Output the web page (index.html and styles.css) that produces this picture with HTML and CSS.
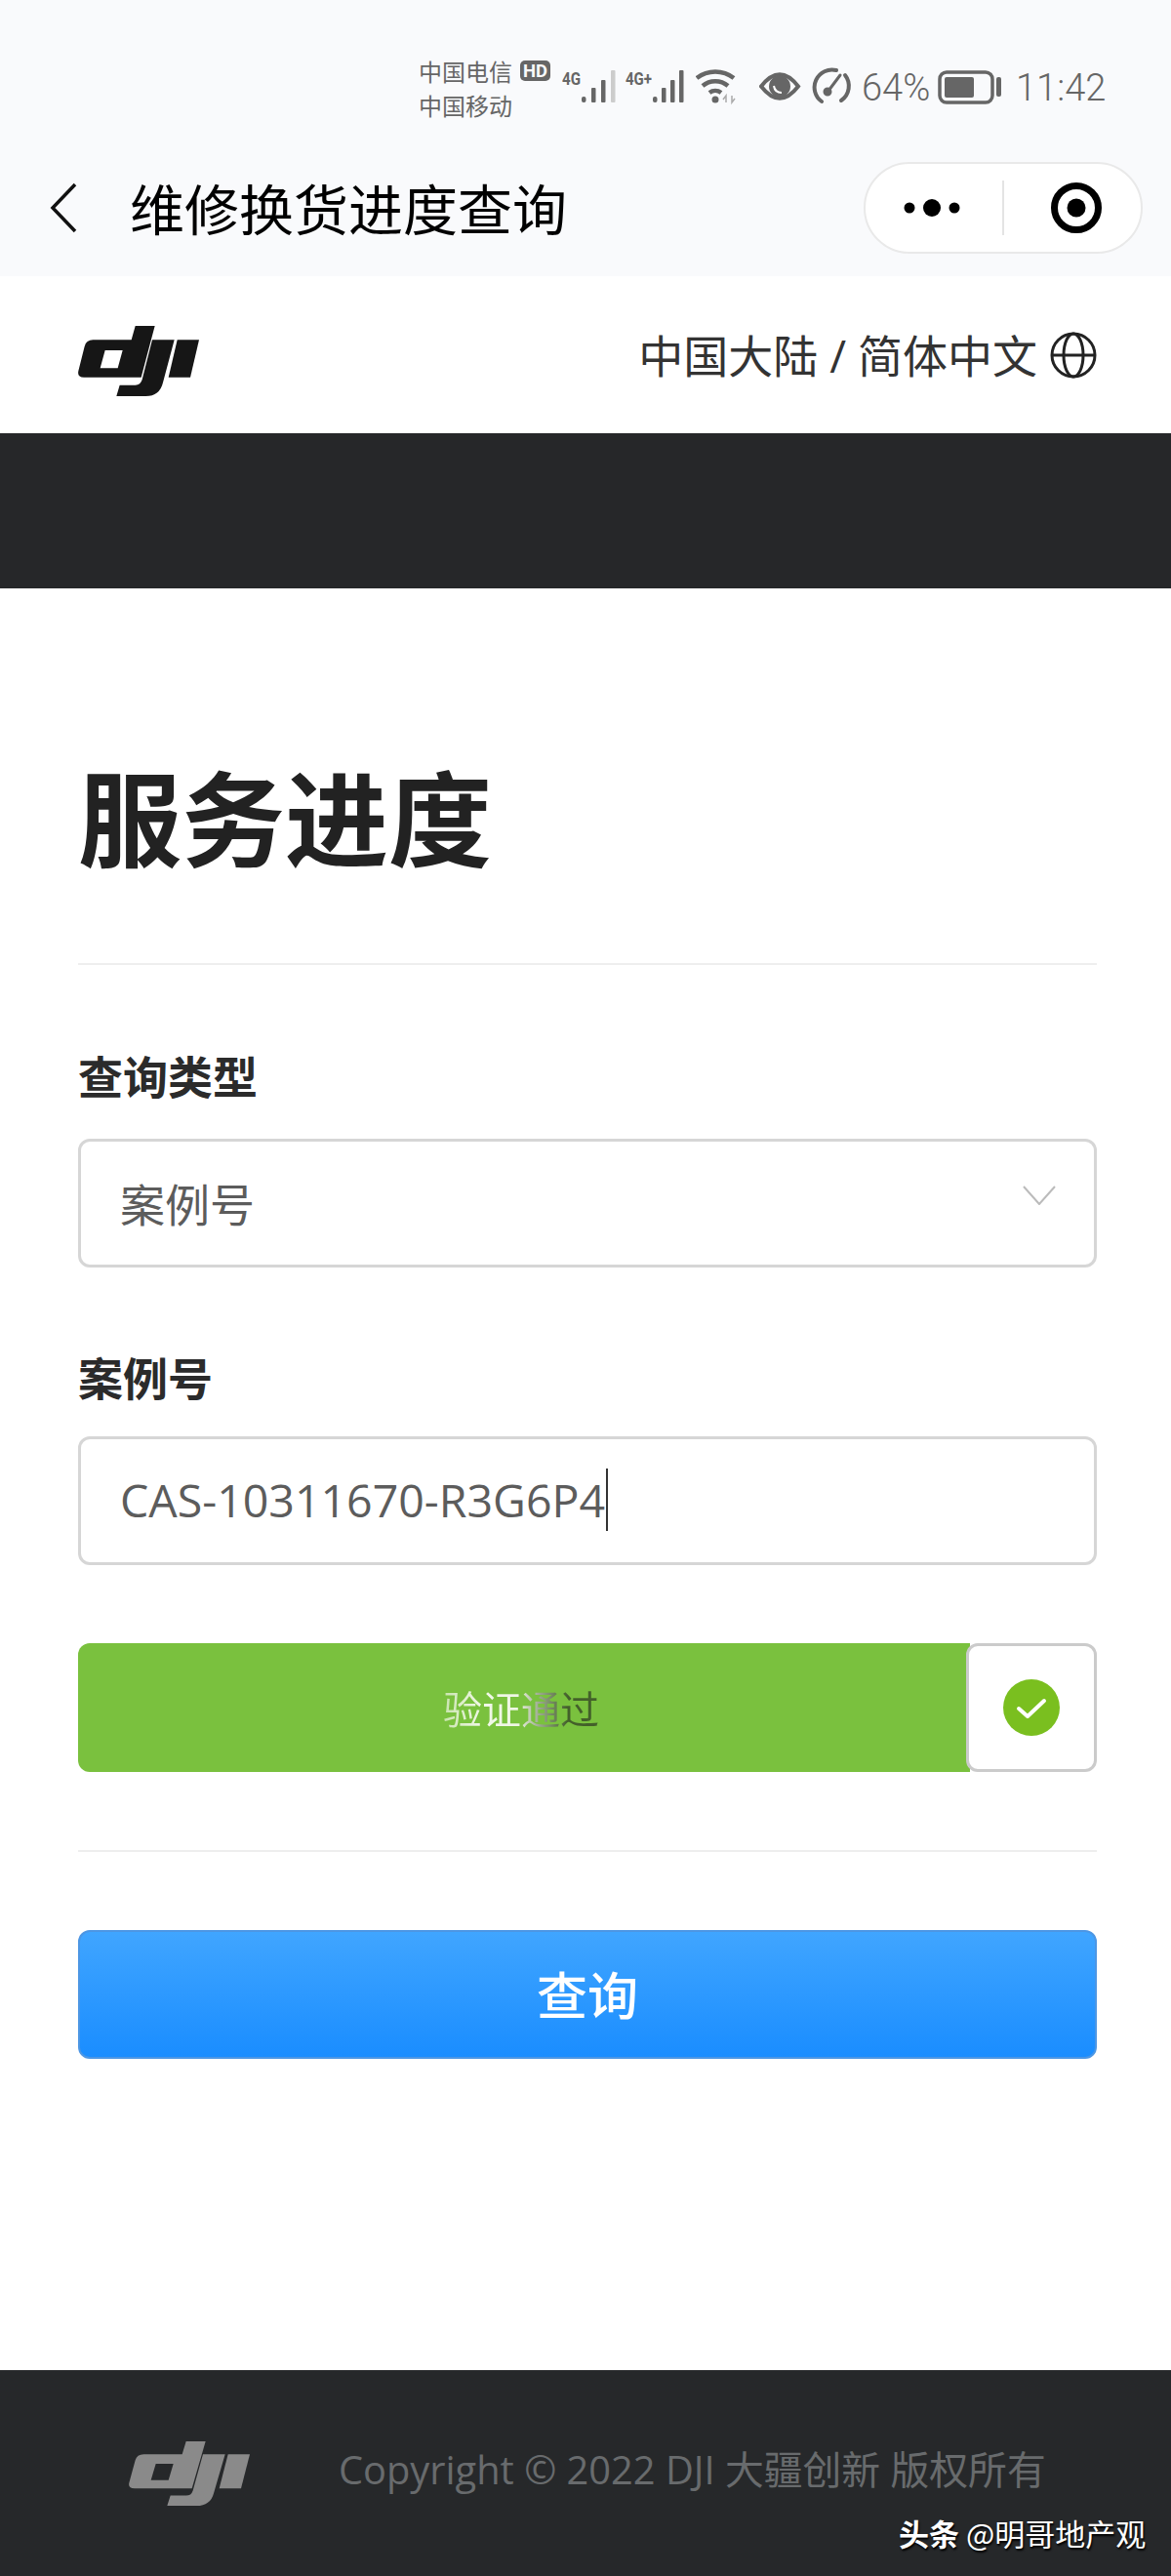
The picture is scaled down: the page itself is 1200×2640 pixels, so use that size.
FILE: index.html
```html
<!DOCTYPE HTML>
<html>
<head>
<meta charset="utf-8">
<title>维修换货进度查询</title>
<link rel="stylesheet" href="styles.css">
</head>
<body>
  <!-- shared logo, bounding box 60..432 x 42..258 -->
  <svg class="defs" width="0" height="0">
    <symbol id="dji" viewBox="60 42 372 216" preserveAspectRatio="none">
      <path fill-rule="evenodd" d="M236 42H296L254 200H78Q57 200 61 181L80 105Q85 85 106 85H224ZM143 117L128 172H182L197 117Z"/>
      <path d="M288 85H356L321 216Q311 258 268 258H178L188 224H236Q252 224 257 207Z"/>
      <path d="M365 85H432L405 200H338Z"/>
    </symbol>
  </svg>

  <div class="topbar">
    <div class="status">
      <div class="carriers">中国电信<br>中国移动</div>
      <svg class="ico" width="35" height="70" viewBox="0 0 35 70">
        <rect y="7" width="31" height="21" rx="5" fill="#666"/>
        <text x="15.5" y="24" class="hd" textLength="25" lengthAdjust="spacingAndGlyphs">HD</text>
      </svg>
      <svg class="ico" width="56" height="70" viewBox="0 0 56 70">
        <text x="0" y="32" class="net" textLength="19" lengthAdjust="spacingAndGlyphs">4G</text>
        <rect x="20" y="44" width="4.5" height="6" rx="2" fill="#666"/>
        <rect x="30" y="35" width="4.5" height="15" rx="1" fill="#666"/>
        <rect x="40" y="27" width="4.5" height="23" rx="1" fill="#666"/>
        <rect x="50" y="17" width="4.5" height="33" rx="1" fill="#ccc"/>
      </svg>
      <svg class="ico" width="65" height="70" viewBox="0 0 65 70">
        <text x="1" y="32" class="net" textLength="27" lengthAdjust="spacingAndGlyphs">4G+</text>
        <rect x="29" y="44" width="4.5" height="6" rx="2" fill="#666"/>
        <rect x="38" y="35" width="4.5" height="15" rx="1" fill="#666"/>
        <rect x="47" y="27" width="4.5" height="23" rx="1" fill="#666"/>
        <rect x="56" y="17" width="4.5" height="33" rx="1" fill="#666"/>
      </svg>
      <svg class="ico" width="57" height="70" viewBox="0 0 57 70" fill="none" stroke="#666" stroke-width="4.5">
        <path d="M1 25A31 31 0 0 1 39 25"/>
        <path d="M7 33A20 20 0 0 1 33 33"/>
        <path d="M14 40A10 10 0 0 1 26 40"/>
        <circle cx="20" cy="47" r="3.5" fill="#666" stroke="none"/>
        <path d="M31 50V43L28 47M37 43V50L40 46" stroke="#aaa" stroke-width="1.5"/>
      </svg>
      <svg class="ico" width="46" height="70" viewBox="0 0 46 70">
        <path d="M2 33.5Q21 9 40 33.5Q21 58 2 33.5Z" fill="none" stroke="#666" stroke-width="4"/>
        <circle cx="21" cy="33.5" r="11" fill="#666"/>
        <path d="M15 33Q16 40 23 40" fill="none" stroke="#fff" stroke-width="2"/>
      </svg>
      <svg class="ico" width="43" height="70" viewBox="0 0 43 70" fill="none" stroke="#666" stroke-width="4" stroke-linecap="round">
        <path d="M10 49A18 18 0 0 1 25 17"/>
        <path d="M34 22A18 18 0 0 1 30 48"/>
        <path d="M17 38L29 22" stroke-width="3"/>
        <circle cx="16" cy="39" r="2.5" fill="#666"/>
      </svg>
      <div class="pct">64%</div>
      <svg class="ico" width="72" height="70" viewBox="0 0 72 70">
        <rect x="2" y="19" width="54" height="31" rx="7" fill="none" stroke="#666" stroke-width="3.5"/>
        <rect x="7" y="24" width="30" height="21" rx="2" fill="#666"/>
        <rect x="60" y="24" width="5" height="20" rx="2" fill="#666"/>
      </svg>
      <div class="clock">11:42</div>
    </div>
    <div class="nav">
      <svg class="back" width="28" height="52" viewBox="0 0 28 52">
        <path d="M26 2L3 26L26 50" fill="none" stroke="#111" stroke-width="3.5"/>
      </svg>
      <div class="nav-title">维修换货进度查询</div>
      <div class="capsule">
        <div class="cap-cell">
          <svg class="cap-dots" width="58" height="20" viewBox="0 0 58 20">
            <circle cx="6" cy="10" r="5.5"/><circle cx="29" cy="10" r="9"/><circle cx="52" cy="10" r="5.5"/>
          </svg>
        </div>
        <div class="cap-line"></div>
        <div class="cap-cell">
          <svg class="cap-target" width="54" height="54" viewBox="0 0 54 54">
            <circle cx="27" cy="27" r="22.5" fill="none" stroke="#000" stroke-width="7"/>
            <circle cx="27" cy="27" r="9.5"/>
          </svg>
        </div>
      </div>
    </div>
  </div>

  <header class="site-head">
    <svg class="logo head-logo" width="124" height="72"><use href="#dji"/></svg>
    <div class="lang">
      <span class="lang-text">中国大陆 / 简体中文</span>
      <svg width="48" height="48" viewBox="0 0 48 48" fill="none" stroke="#222" stroke-width="3">
        <circle cx="24" cy="24" r="22"/>
        <ellipse cx="24" cy="24" rx="10" ry="22"/>
        <path d="M2 24H46"/>
      </svg>
    </div>
  </header>

  <div class="banner"></div>

  <main class="content">
    <h1 class="title">服务进度</h1>
    <div class="rule"></div>

    <div class="label">查询类型</div>
    <div class="box select-box">
      <span>案例号</span>
      <svg width="34" height="20" viewBox="0 0 34 20">
        <path d="M1 1L17 19L33 1" fill="none" stroke="#bbb" stroke-width="2"/>
      </svg>
    </div>

    <div class="label label-case">案例号</div>
    <div class="box">CAS-10311670-R3G6P4<span class="caret"></span></div>

    <div class="slider">
      <div class="slider-fill"><span class="slider-text">验证通过</span></div>
      <div class="slider-handle">
        <svg width="58" height="58" viewBox="0 0 58 58">
          <circle cx="29" cy="29" r="29" fill="#7abf1f"/>
          <path d="M16 30L25 38L42 22" fill="none" stroke="#fff" stroke-width="4" stroke-linecap="round" stroke-linejoin="round"/>
        </svg>
      </div>
    </div>

    <div class="rule rule-low"></div>
    <div class="submit">查询</div>
  </main>

  <footer class="foot">
    <svg class="logo foot-logo" width="124" height="66"><use href="#dji"/></svg>
    <div class="copy">Copyright © 2022 DJI 大疆创新 版权所有</div>
    <div class="mark"><b>头条</b> @明哥地产观</div>
  </footer>
</body>
</html>
```
FILE: styles.css
```css
/* whole page is one phone screen */
html, body { margin: 0; padding: 0; }
body {
  width: 1200px; height: 2640px;
  display: flex; flex-direction: column;
  background: #fff;
  font-family: "Open Sans", "Noto Sans CJK SC", sans-serif;
  overflow: hidden;
}
.defs { position: absolute; }

/* status bar + wechat nav */
.topbar { background: #f9fafc; height: 283px; flex: none; }
.status {
  height: 160px; box-sizing: border-box;
  padding: 55px 67px 0 0;
  display: flex; justify-content: flex-end; align-items: flex-start; gap: 8px;
  color: #666;
}
.carriers { font-family: "Noto Sans CJK SC", sans-serif; font-size: 24px; line-height: 35px; width: 96px; white-space: nowrap; }
.ico { display: block; flex: none; }
.hd { font: bold 18px "Roboto", sans-serif; fill: #f9fafc; text-anchor: middle; }
.net { font: bold 19px "Roboto", sans-serif; fill: #666; }
.pct, .clock { font-family: "Roboto", sans-serif; font-weight: 300; line-height: 70px; white-space: nowrap; }
.pct { font-size: 38px; width: 70px; }
.clock { font-size: 38px; width: 92px; text-align: right; }

.nav { height: 106px; display: flex; align-items: center; padding: 0 29px 0 51px; }
.back { flex: none; display: block; }
.nav-title { font-family: "Noto Sans CJK SC", sans-serif; font-size: 56px; color: #000; margin: 0 0 3px 54px; flex: 1; white-space: nowrap; }
.capsule {
  width: 286px; height: 94px; box-sizing: border-box;
  background: #fff; border: 2px solid #e9e9e9; border-radius: 47px;
  display: flex; align-items: center;
}
.cap-cell { flex: 1; display: flex; justify-content: center; }
.cap-cell svg { display: block; }
.cap-dots { margin-right: 4px; }
.cap-target { margin-left: 8px; }
.cap-line { width: 2px; height: 56px; background: #e4e4e4; }

/* site header */
.site-head {
  height: 161px; flex: none; box-sizing: border-box;
  padding: 0 76px 0 80px;
  display: flex; align-items: center; justify-content: space-between;
}
.logo { display: block; fill: #161616; }
.head-logo { margin-top: 13px; }
.lang { display: flex; align-items: center; gap: 13px; font-size: 46px; color: #333; white-space: nowrap; }
.lang-text { margin-bottom: 3px; }
.lang svg { display: block; }
.banner { height: 159px; flex: none; background: #262729; }

/* form */
.content { flex: 1; padding: 171px 76px 0 80px; }
.title { margin: 0 0 93px; font-family: "Noto Sans CJK SC", sans-serif; font-size: 106px; line-height: 120px; font-weight: 700; color: #222; }
.rule { height: 2px; background: #eee; }
.label { margin: 82px 0 36px; font-family: "Noto Sans CJK SC", sans-serif; font-size: 46px; line-height: 60px; font-weight: 700; color: #2b2b2b; }
.label-case { margin: 81px 0 32px; }
.box {
  height: 132px; box-sizing: border-box;
  padding: 0 40px 3px;
  border: 3px solid #d6d6d6; border-radius: 12px;
  display: flex; align-items: center;
  font-size: 46.5px; color: #5c5c5c;
}
.select-box { justify-content: space-between; padding-right: 39px; font-size: 46px; }
.select-box svg { display: block; margin-bottom: 14px; }
.caret { width: 2px; height: 64px; background: #333; margin-left: 1px; }

.slider { margin-top: 80px; height: 132px; display: flex; }
.slider-fill {
  flex: 1; background: #7ac13e; border-radius: 12px 0 0 12px;
  display: flex; align-items: center; justify-content: center;
  padding-right: 6px;
  margin-right: -4px;
}
.slider-text {
  font-family: "Noto Sans CJK SC", sans-serif; font-size: 40px;
  background: linear-gradient(90deg, #c9e4ae 0%, #f1f8e8 25%, #eef6e4 48%, #9aa88c 62%, #43602a 80%, #43602a 100%);
  -webkit-background-clip: text; background-clip: text;
  color: transparent;
}
.slider-handle {
  width: 134px; box-sizing: border-box; background: #fff;
  border: 3px solid #cbcbcb; border-radius: 12px;
  display: flex; align-items: center; justify-content: center;
  position: relative;
}
.slider-handle svg { display: block; }
.rule-low { margin-top: 80px; }

.submit {
  margin-top: 80px; height: 132px; box-sizing: border-box;
  padding-bottom: 3px;
  border: 2px solid #4c96e4; border-radius: 12px;
  background: linear-gradient(#40a5ff, #1a8dff);
  display: flex; align-items: center; justify-content: center;
  font-family: "Noto Sans CJK SC", sans-serif; font-size: 52px; font-weight: 500; color: #fff;
}

/* footer */
.foot {
  height: 211px; flex: none; box-sizing: border-box;
  background: #26282a;
  padding-left: 132px;
  display: flex; align-items: center; gap: 91px;
  position: relative;
}
.foot-logo { fill: #8a8a8a; }
.copy { font-size: 39.8px; color: #686b6d; white-space: nowrap; margin-bottom: 12px; }
.mark {
  position: absolute; left: 921px; top: 147px;
  font-family: "Noto Sans CJK SC", sans-serif; font-size: 31px; line-height: 40px; color: #fff;
  text-shadow: 1px 2px 2px #000; white-space: nowrap;
}
.mark b { font-weight: 700; }
```
